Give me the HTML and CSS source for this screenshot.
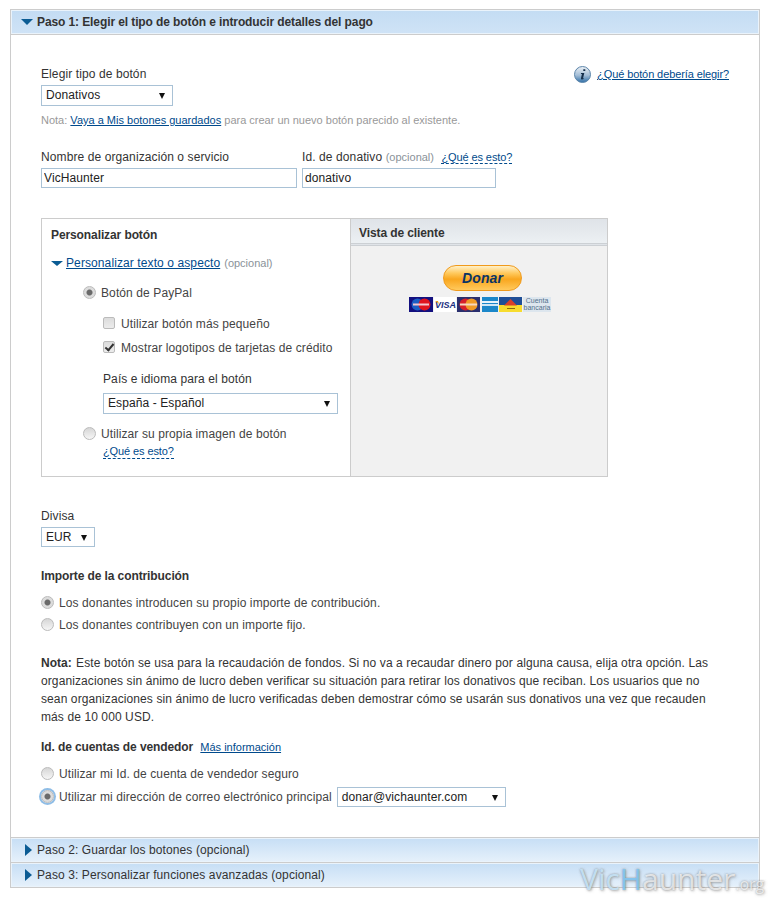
FILE: index.html
```html
<!DOCTYPE html>
<html lang="es">
<head>
  <meta charset="UTF-8">
  <meta name="viewport" content="width=device-width, initial-scale=1">
  <title>Crear botón de PayPal</title>
  <link rel="stylesheet" href="styles.css">
</head>
<body>

  <div class="wizard">

    <!-- PASO 1 -->
    <h2 class="step-head"><span class="arrow-down"></span>Paso 1: Elegir el tipo de botón e introducir detalles del pago</h2>

    <div class="step-body">

      <div class="type-row">
        <div>
          <label class="field-label">Elegir tipo de botón</label>
          <div class="select select-type">Donativos</div>
        </div>
        <div class="help-link">
          <svg class="info-icon" width="17" height="17" viewBox="0 0 17 17">
            <defs>
              <linearGradient id="infoFill" x1="0" y1="0" x2="0" y2="1">
                <stop offset="0" stop-color="#eef2f6"/>
                <stop offset="0.55" stop-color="#a3bdd6"/>
                <stop offset="1" stop-color="#2f6ea6"/>
              </linearGradient>
            </defs>
            <circle cx="8.5" cy="8.5" r="8" fill="url(#infoFill)" stroke="#5d86ab"/>
            <path d="M9.3 3.2h2v1.9h-2zM7 6.9h3.3l-1.2 5.2c-.1.4.2.5.9.2l-.2.8c-1.500.7-3.100.6-2.800-.9l.9-4.200-1 .1z" fill="#16304c"/>
          </svg>
          <a href="#">¿Qué botón debería elegir?</a>
        </div>
      </div>

      <p class="note">Nota: <a href="#">Vaya a Mis botones guardados</a> para crear un nuevo botón parecido al existente.</p>

      <div class="fields-row">
        <div class="field-org">
          <label class="field-label">Nombre de organización o servicio</label>
          <input class="text-input" type="text" value="VicHaunter">
        </div>
        <div class="field-id">
          <label class="field-label">Id. de donativo <span class="optional">(opcional)</span> <a class="what-link" href="#">¿Qué es esto?</a></label>
          <input class="text-input" type="text" value="donativo">
        </div>
      </div>

      <!-- personalizar + vista previa -->
      <div class="custom-box">
        <div class="custom-left">
          <h3 class="box-title">Personalizar botón</h3>
          <div class="custom-toggle">
            <span class="arrow-down"></span><a href="#">Personalizar texto o aspecto</a> <span class="optional">(opcional)</span>
          </div>
          <label class="option option-paypal"><input type="radio" name="img" checked>Botón de PayPal</label>
          <div class="paypal-opts">
            <label class="option"><input type="checkbox">Utilizar botón más pequeño</label>
            <label class="option"><input type="checkbox" checked>Mostrar logotipos de tarjetas de crédito</label>
            <label class="field-label country-label">País e idioma para el botón</label>
            <div class="select select-country">España - Español</div>
          </div>
          <label class="option option-own"><input type="radio" name="img">Utilizar su propia imagen de botón</label>
          <a class="what-link what-own" href="#">¿Qué es esto?</a>
        </div>
        <div class="custom-right">
          <div class="preview-head">Vista de cliente</div>
          <div class="preview-body">
            <div class="donate-btn">Donar</div>
            <div class="cards">
              <svg width="24" height="15" viewBox="0 0 24 15"><rect width="24" height="15" fill="#13107f"/><circle cx="8.500" cy="7.500" r="6" fill="#1c5fc4"/><circle cx="15.500" cy="7.500" r="6" fill="#e0141f"/><rect x="4" y="6.500" width="16" height="2" fill="#f3c6cf"/></svg>
              <svg width="22" height="15" viewBox="0 0 22 15"><rect width="22" height="15" fill="#fff"/><text x="11.500" y="11" text-anchor="middle" class="visa-text">VISA</text><path d="M1 4l3 0 1 3z" fill="#e8a020"/></svg>
              <svg width="23" height="15" viewBox="0 0 23 15"><rect width="23" height="15" fill="#2a2f6e"/><circle cx="8.500" cy="7.500" r="6" fill="#d6202a"/><circle cx="14.500" cy="7.500" r="6" fill="#ef9a26"/><rect x="3" y="6.500" width="17" height="2" fill="#f6d8c0"/></svg>
              <svg class="card-gap" width="16" height="15" viewBox="0 0 16 15"><rect width="16" height="15" fill="#1b87c9"/><rect y="4" width="16" height="2" fill="#e6f2fa"/><rect y="7" width="16" height="2" fill="#cfe7f6"/></svg>
              <svg width="23" height="15" viewBox="0 0 23 15"><rect width="23" height="8" fill="#1f4e96"/><rect y="8" width="23" height="7" fill="#f7dc2e"/><path d="M5 8.500 11.500 2 18 8.500z" fill="#d8402a"/><rect x="8" y="11" width="8" height="1" fill="#8a6a10"/></svg>
              <div class="card-bank">Cuenta<br>bancaria</div>
            </div>
          </div>
        </div>
      </div>

      <label class="field-label currency-label">Divisa</label>
      <div class="select select-currency">EUR</div>

      <h3 class="section-title amount-title">Importe de la contribución</h3>
      <label class="option"><input type="radio" name="amount" checked>Los donantes introducen su propio importe de contribución.</label>
      <label class="option option-second"><input type="radio" name="amount">Los donantes contribuyen con un importe fijo.</label>

      <p class="warning"><b>Nota:</b> Este botón se usa para la recaudación de fondos. Si no va a recaudar dinero por alguna causa, elija otra opción. Las organizaciones sin ánimo de lucro deben verificar su situación para retirar los donativos que reciban. Los usuarios que no sean organizaciones sin ánimo de lucro verificadas deben demostrar cómo se usarán sus donativos una vez que recauden más de 10 000 USD.</p>

      <h3 class="section-title merchant-title">Id. de cuentas de vendedor <a class="more-link" href="#">Más información</a></h3>
      <label class="option merchant-first"><input type="radio" name="merchant">Utilizar mi Id. de cuenta de vendedor seguro</label>
      <div class="merchant-row">
        <label class="option"><input class="focused" type="radio" name="merchant" checked>Utilizar mi dirección de correo electrónico principal</label>
        <div class="select select-email">donar@vichaunter.com</div>
      </div>
    </div>

    <!-- PASOS CERRADOS -->
    <h2 class="step-head step-closed"><span class="arrow-right"></span>Paso 2: Guardar los botones (opcional)</h2>
    <h2 class="step-head step-closed"><span class="arrow-right"></span>Paso 3: Personalizar funciones avanzadas (opcional)</h2>
  </div>

  <!-- marca de agua -->
  <div class="watermark"><span class="wm-vic">Vic</span><span class="wm-h">H</span>aunter<span class="wm-org">.org</span></div>

</body>
</html>
```

FILE: styles.css
```css
/* base */
html, body { margin: 0; padding: 0; background: #fff; }
body {
  position: relative;
  height: 900px;
  overflow: hidden;
  font-family: 'Liberation Sans', Arial, sans-serif;
  font-size: 12px;
  line-height: 16px;
  color: #333;
  letter-spacing: .1px;
}
a { color: #004a8c; text-decoration: underline; }
h2, h3, p { margin: 0; }

/* wizard */
.wizard { width: 750px; margin: 9px 0 0 10px; }

.step-head {
  display: flex; align-items: center;
  box-sizing: border-box;
  height: 26px;
  padding: 0 0 1px 10px;
  font-size: 12px; font-weight: bold; color: #333;
  letter-spacing: -.1px;
  border: 1px solid #ccc;
  box-shadow: inset 0 0 0 1px #eaf3fb;
  background: linear-gradient(#c3dcf3, #cfe3f6);
}
.step-closed {
  height: 25px; border-top: 1px solid #ccc; border-bottom: 0;
  font-weight: normal; letter-spacing: .1px;
  background: linear-gradient(#c6def5, #e6f1fb);
}
.step-closed:last-child { height: 26px; border-bottom: 1px solid #ccc; }

.arrow-down {
  display: inline-block; width: 0; height: 0; margin-right: 4px;
  border-left: 6px solid transparent; border-right: 6px solid transparent;
  border-top: 6px solid #0b5c94;
}
.arrow-right {
  display: inline-block; width: 0; height: 0; margin: 0 5px 0 4px;
  border-top: 6px solid transparent; border-bottom: 6px solid transparent;
  border-left: 7px solid #0b5c94;
}

.step-body {
  height: 802px; box-sizing: border-box;
  padding: 31px 30px 0;
  border-left: 1px solid #ccc; border-right: 1px solid #ccc;
}

/* campos */
.type-row { display: flex; justify-content: space-between; }
.field-label { display: block; color: #333; }
.select {
  position: relative; box-sizing: border-box;
  height: 21px; padding-left: 4px;
  line-height: 18px; color: #222;
  background: #fff; border: 1px solid #a9c2d6;
}
.select::after {
  content: ""; position: absolute; right: 7px; top: 7px;
  border-left: 3.500px solid transparent; border-right: 3.500px solid transparent;
  border-top: 6px solid #111;
}
.select-type { width: 132px; margin-top: 3px; }

.help-link { display: flex; align-items: flex-start; gap: 6px; }
.help-link a { font-size: 11px; letter-spacing: -.1px; }

.note { margin-top: 6px; font-size: 11px; color: #999; letter-spacing: 0; }

.fields-row { display: flex; gap: 5px; margin-top: 21px; }
.field-org { width: 256px; }
.field-id { width: 194px; white-space: nowrap; }
.text-input {
  display: block; box-sizing: border-box; width: 100%;
  height: 20px; margin-top: 3px; padding: 0 2px;
  font: 12px 'Liberation Sans', Arial, sans-serif; letter-spacing: .1px; color: #222;
  border: 1px solid #a9c2d6; border-radius: 0; outline: 0;
}
.optional { font-size: 11px; color: #8a9299; letter-spacing: 0; }
.what-link {
  margin-left: 4px; font-size: 11px; letter-spacing: -.1px;
  text-decoration: none; border-bottom: 1px dashed #004a8c;
}

/* personalizar */
.custom-box {
  display: flex;
  width: 567px; height: 259px; box-sizing: border-box;
  margin-top: 30px;
  border: 1px solid #ccc;
}
.custom-left {
  width: 309px; box-sizing: border-box;
  padding: 8px 9px 0; border-right: 1px solid #ccc;
}
.box-title, .section-title { font-size: 12px; font-weight: bold; color: #333; letter-spacing: -.1px; }
.custom-toggle { display: flex; align-items: center; margin-top: 12px; white-space: pre; }
.custom-toggle .arrow-down { margin-right: 3px; border-top-width: 5px; }
.custom-toggle .optional { margin-left: 4px; }

.option { display: flex; align-items: center; color: #444; }
.option input {
  appearance: none; flex: none;
  box-sizing: border-box;
  width: 13px; height: 13px; margin: 0 5px 2px 0;
  border: 1px solid #bbb;
  background: linear-gradient(#d6d6d6, #f6f6f6);
}
.option input[type=radio] { border-radius: 50%; }
.option input[type=radio]:checked {
  background: radial-gradient(circle, #6a6a6a 0 2.500px, #dcdcdc 3.500px);
}
.option input[type=checkbox] {
  position: relative;
  width: 12px; height: 12px; margin: 0 6px 3px 0;
  border-radius: 2px;
  background: linear-gradient(#dcdcdc, #ececec);
}
.option input[type=checkbox]:checked::after {
  content: ""; position: absolute; left: 3px; top: 0;
  width: 3px; height: 7px;
  border: solid #333; border-width: 0 2px 2px 0;
  transform: rotate(40deg);
}
.option input.focused { box-shadow: 0 0 0 2px #8fbde6; }

.option-paypal { margin: 14px 0 0 32px; }
.paypal-opts { margin: 15px 0 0 52px; }
.paypal-opts .option + .option { margin-top: 8px; }
.country-label { margin-top: 15px; }
.select-country { width: 235px; margin-top: 6px; }
.option-own { margin: 12px 0 0 32px; }
.what-own { display: inline-block; margin: 3px 0 0 52px; line-height: 13px; }
.option-paypal input, .option-own input { margin-right: 5px; }

/* vista previa */
.custom-right { flex: 1; display: flex; flex-direction: column; background: #f1f1f1; }
.preview-head {
  box-sizing: border-box; height: 27px; padding: 6px 8px 0;
  font-weight: bold; color: #333; letter-spacing: -.1px;
  background: linear-gradient(#dfe3e8, #ecf0f3);
  border-bottom: 3px double #ccd0d4;
}
.preview-body { flex: 1; padding: 19px 0 0 58px; }
.donate-btn {
  box-sizing: border-box; width: 79px; height: 26px; margin-left: 34px;
  font-size: 14px; font-weight: bold; font-style: italic; line-height: 24px;
  text-align: center; color: #0c3566;
  background: linear-gradient(#fff0c8 0, #ffc95c 30%, #f9a61e 55%, #ffc95c 100%);
  border: 1px solid #f09a1c; border-radius: 13px;
}
.cards { display: flex; margin-top: 6px; }
.cards svg { display: block; margin-right: 1px; }
.cards .card-gap { margin-left: 1px; }
.visa-text { font: italic bold 9px 'Liberation Sans', Arial, sans-serif; letter-spacing: 0; fill: #1a2f80; }
.card-bank {
  width: 28px; height: 15px;
  font-size: 7px; line-height: 7px; letter-spacing: 0; text-align: center; color: #52708c;
  background: #dde6ee;
}

/* divisa */
.currency-label { margin-top: 31px; }
.select-currency { width: 54px; height: 20px; margin-top: 3px; }
.amount-title { margin-top: 21px; }
.amount-title + .option { margin-top: 11px; }
.option-second { margin-top: 6px; }

.warning { margin-top: 21px; line-height: 18px; }
.warning b { color: #333; letter-spacing: 0; margin-right: 1px; }

.merchant-title { margin-top: 13px; }
.more-link { margin-left: 4px; font-size: 11px; font-weight: normal; letter-spacing: 0; }
.merchant-first { margin-top: 11px; }
.merchant-row { display: flex; align-items: center; gap: 5px; margin-top: 5px; }
.select-email { width: 169px; height: 20px; }

/* watermark */
.watermark {
  position: absolute; left: 580px; top: 861px;
  font-family: 'Open Sans', sans-serif; font-size: 30px; line-height: 36px;
  letter-spacing: 0; color: rgba(255,255,255,.7);
  text-shadow: 0 0 2px rgba(120,120,120,.7), 1px 1px 3px rgba(120,120,120,.5);
  white-space: nowrap; pointer-events: none;
}
.wm-vic { color: rgba(200,230,250,.9); }
.wm-h { color: rgba(130,200,245,.9); }
.wm-org { font-size: 16px; }
```
